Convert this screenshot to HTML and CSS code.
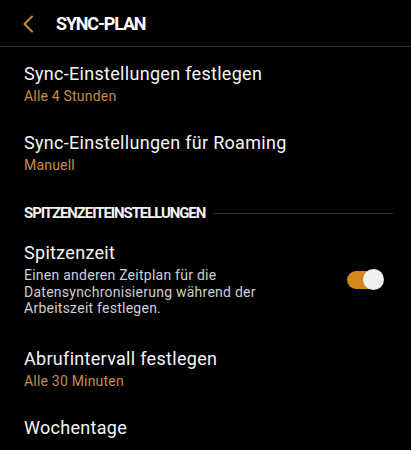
FILE: index.html
```html
<!DOCTYPE html>
<html lang="de">
<head>
<meta charset="utf-8">
<title>Sync-Plan</title>
<link rel="stylesheet" href="styles.css">
</head>
<body>
<header class="appbar">
  <svg class="back" width="12" height="18" viewBox="0 0 12 18" aria-hidden="true">
    <path d="M10 1.5 L2.5 9 L10 16.5" fill="none" stroke="#c98a3c" stroke-width="2" stroke-linecap="round" stroke-linejoin="round"/>
  </svg>
  <h1 class="title">SYNC-PLAN</h1>
</header>
<main class="list">
  <div class="item">
    <div class="item-title">Sync-Einstellungen festlegen</div>
    <div class="item-sub">Alle 4 Stunden</div>
  </div>
  <div class="item">
    <div class="item-title">Sync-Einstellungen für Roaming</div>
    <div class="item-sub">Manuell</div>
  </div>
  <div class="section">
    <span class="section-label">SPITZENZEITEINSTELLUNGEN</span>
    <span class="section-line"></span>
  </div>
  <div class="item item-switch">
    <div class="item-text">
      <div class="item-title">Spitzenzeit</div>
      <div class="item-desc">Einen anderen Zeitplan für die Datensynchronisierung während der Arbeitszeit festlegen.</div>
    </div>
    <div class="toggle">
      <span class="toggle-track"></span>
      <span class="toggle-thumb"></span>
    </div>
  </div>
  <div class="item">
    <div class="item-title">Abrufintervall festlegen</div>
    <div class="item-sub">Alle 30 Minuten</div>
  </div>
  <div class="item">
    <div class="item-title">Wochentage</div>
  </div>
</main>
</body>
</html>
```
FILE: styles.css
```css
html, body {
  margin: 0;
  padding: 0;
  background: #000;
}
body {
  font-family: Roboto, "Noto Sans", "Liberation Sans", sans-serif;
  color: #f5f5f5;
  width: 411px;
  height: 450px;
  overflow: hidden;
}
.appbar {
  height: 47px;
  display: flex;
  align-items: center;
  padding-left: 22px;
  padding-top: 1px;
  box-sizing: border-box;
  border-bottom: 1px solid #2e2e2e;
}
.back {
  display: block;
  flex: none;
}
.title {
  margin: 0 0 0 22px;
  font-size: 18px;
  font-weight: 700;
  letter-spacing: -1.2px;
  color: #fff;
  line-height: 22px;
}
.list {
  padding-top: 4px;
}
.item {
  padding: 12px 24px 14px;
}
.item-title {
  font-size: 18px;
  line-height: 22px;
  letter-spacing: 0.3px;
  color: #f5f5f5;
}
.item-sub {
  margin-top: 1px;
  font-size: 14px;
  line-height: 20px;
  letter-spacing: 0.2px;
  color: #c88b50;
}
.section {
  display: flex;
  align-items: center;
  margin: 14px 18px 7px 24px;
  height: 20px;
}
.section-label {
  font-size: 15px;
  font-weight: 700;
  letter-spacing: -1.1px;
  line-height: 20px;
  color: #f2f2f2;
  white-space: nowrap;
}
.section-line {
  flex: 1;
  height: 1px;
  background: #2e2e2e;
  margin-left: 8px;
}
.item-switch {
  display: flex;
  align-items: center;
  padding-right: 27px;
  padding-bottom: 19px;
}
.item-text {
  flex: 1;
  margin-right: 50px;
}
.item-desc {
  margin-top: 3px;
  font-size: 14px;
  line-height: 16.7px;
  letter-spacing: 0.25px;
  color: #cfcfcf;
}
.toggle {
  position: relative;
  width: 37px;
  height: 21px;
  flex: none;
}
.toggle-track {
  position: absolute;
  left: 0;
  top: 1.5px;
  width: 34px;
  height: 18px;
  border-radius: 9px;
  background: #d4871e;
}
.toggle-thumb {
  position: absolute;
  right: 0;
  top: 0;
  width: 21px;
  height: 21px;
  border-radius: 50%;
  background: #f0f0f0;
}
```
